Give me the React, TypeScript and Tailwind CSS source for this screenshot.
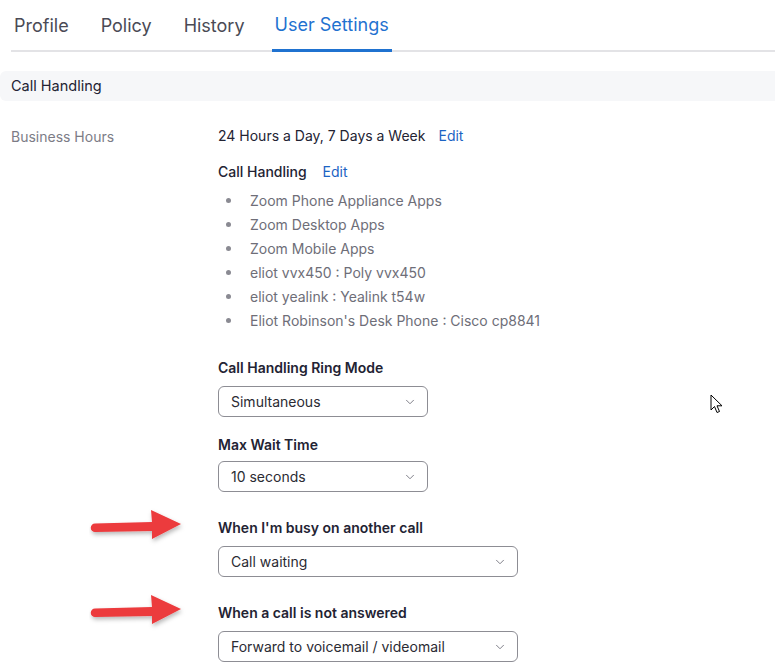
import { ChevronDown } from "lucide-react";

const devices = [
  "Zoom Phone Appliance Apps",
  "Zoom Desktop Apps",
  "Zoom Mobile Apps",
  "eliot vvx450 : Poly vvx450",
  "eliot yealink : Yealink t54w",
  "Eliot Robinson's Desk Phone : Cisco cp8841",
];

function Select({ value, wide }: { value: string; wide?: boolean }) {
  return (
    <div
      className={`flex items-center justify-between h-[31px] rounded-[6px] border border-[#8d8d94] pl-3 pr-[10px] text-[14px] text-[#2b2b33] ${
        wide ? "w-[300px]" : "w-[210px]"
      }`}
    >
      <span>{value}</span>
      <ChevronDown className="w-[14px] h-[14px] text-[#6e6e78]" strokeWidth={1.5} />
    </div>
  );
}

function Arrow() {
  return (
    <svg width="100" height="42" viewBox="0 0 100 42" className="absolute">
      <defs>
        <filter id="sh" x="-10%" y="-30%" width="130%" height="170%">
          <feDropShadow dx="1" dy="2.5" stdDeviation="2" floodColor="#000" floodOpacity="0.28" />
        </filter>
      </defs>
      <path
        d="M6 17.5 L63 16 L62 4 L92 18 L63 33 L63 25 L6 26 A4.25 4.25 0 0 1 6 17.5 Z"
        fill="#ec3a3d"
        filter="url(#sh)"
      />
    </svg>
  );
}

export default function App() {
  return (
    <div
      className="relative w-[775px] h-[665px] overflow-hidden bg-white text-[#232333]"
      style={{ fontFamily: "Inter, 'Noto Sans', sans-serif" }}
    >
      {/* tabs */}
      <div className="flex ml-[11px] border-b-2 border-[#e3e3e6] h-[52px] items-stretch">
        <div className="flex items-center px-[3px] text-[18px] text-[#4a4a55] mr-[26px]">Profile</div>
        <div className="flex items-center px-[3px] text-[18px] text-[#4a4a55] mr-[26px]">Policy</div>
        <div className="flex items-center px-[3px] text-[18px] text-[#4a4a55] mr-[24px]">History</div>
        <div className="flex items-center px-[3px] text-[18px] text-[#1f72d0] border-b-[3px] border-[#1f72d0] -mb-[2px]">
          User Settings
        </div>
      </div>

      {/* section band */}
      <div className="mt-[19px] h-[30px] bg-[#f6f7f9] rounded-l-[6px] flex items-center pl-[11px] text-[14.5px] text-[#232333]">
        Call Handling
      </div>

      {/* body */}
      <div className="flex mt-[25px] text-[14px]">
        <div className="w-[218px] pl-[11px] text-[#7c7c86]">Business Hours</div>
        <div className="flex flex-col">
          <div className="flex gap-[13px] leading-[20px]">
            <span>24 Hours a Day, 7 Days a Week</span>
            <span className="text-[#1c64c4]">Edit</span>
          </div>
          <div className="flex gap-[16px] mt-[16px] leading-[20px]">
            <span className="font-medium">Call Handling</span>
            <span className="text-[#1c64c4]">Edit</span>
          </div>
          <ul className="mt-[6px] flex flex-col">
            {devices.map((d) => (
              <li key={d} className="flex items-center h-[24px] text-[#6e6e78]">
                <span className="w-[5px] h-[5px] rounded-full bg-[#8a8a92] ml-[8px] mr-[19px]" />
                {d}
              </li>
            ))}
          </ul>

          <div className="mt-[26px] font-semibold leading-[20px]">Call Handling Ring Mode</div>
          <div className="mt-[8px]">
            <Select value="Simultaneous" />
          </div>

          <div className="mt-[18px] font-semibold leading-[20px]">Max Wait Time</div>
          <div className="mt-[6px]">
            <Select value="10 seconds" />
          </div>

          <div className="mt-[26px] font-semibold leading-[20px]">When I'm busy on another call</div>
          <div className="mt-[8px]">
            <Select value="Call waiting" wide />
          </div>

          <div className="mt-[26px] font-semibold leading-[20px]">When a call is not answered</div>
          <div className="mt-[8px]">
            <Select value="Forward to voicemail / videomail" wide />
          </div>
        </div>
      </div>

      {/* annotation arrows */}
      <div className="absolute left-[89px] top-[506px]">
        <Arrow />
      </div>
      <div className="absolute left-[89px] top-[591px]">
        <Arrow />
      </div>

      {/* mouse cursor */}
      <svg className="absolute left-[710px] top-[394px]" width="14" height="22" viewBox="0 0 14 22">
        <path
          d="M1 1 L1 16 L4.5 12.5 L7 18.5 L9.5 17.5 L7 11.8 L12 11.8 Z"
          fill="#fff"
          stroke="#000"
          strokeWidth="1"
          strokeLinejoin="round"
        />
      </svg>
    </div>
  );
}
